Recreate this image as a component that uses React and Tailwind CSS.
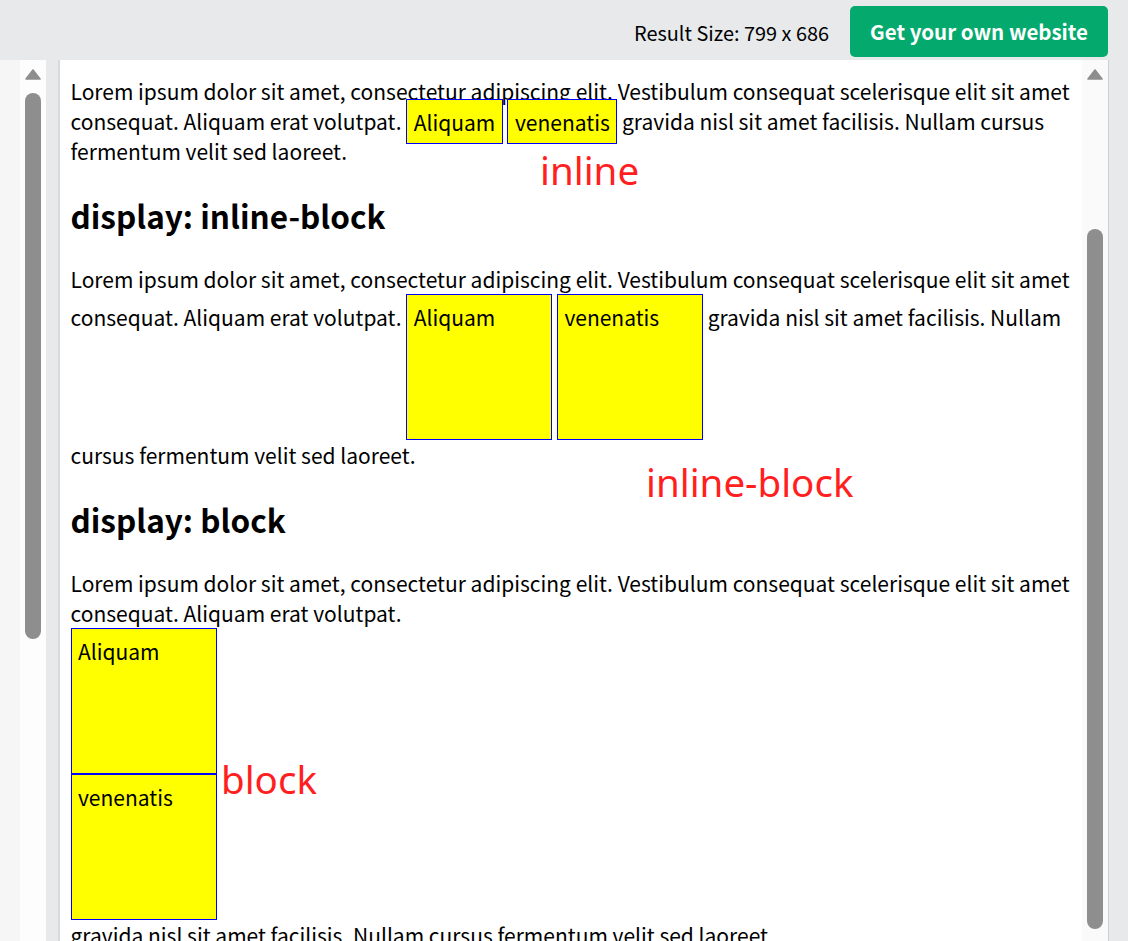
import React from "react";

function Arrow() {
  return (
    <svg width="16" height="11" viewBox="0 0 16 11" className="shrink-0">
      <path d="M8 1 L15 10 H1 Z" fill="#8e8e8e" stroke="#8e8e8e" strokeWidth="1.6" strokeLinejoin="round" />
    </svg>
  );
}

const boxInline = "border border-[#0000ff] bg-[#ffff00] p-[6.5px]";
const boxIB = "inline-block align-baseline w-[146px] h-[146px] border border-[#0000ff] bg-[#ffff00] p-[6.5px]";
const boxBlock = "block w-[146px] h-[146px] border border-[#0000ff] bg-[#ffff00] p-[6.5px]";

export default function App() {
  return (
    <div className="relative w-[1128px] h-[941px] overflow-hidden bg-[#e7e9eb] font-['Noto_Sans_CJK_SC',sans-serif] text-black flex flex-col">
      {/* top bar */}
      <div className="h-[60px] shrink-0 flex items-start justify-end pr-[20px] pt-[6px]">
        <div className="h-[51px] flex items-center">
          <span className="text-[19.9px] leading-none mr-[21px] pt-[2px]">Result Size: 799 x 686</span>
          <div className="w-[258px] h-[51px] rounded-[5px] bg-[#04aa6d] text-white font-bold text-[20.5px] leading-none flex items-center justify-center">
            Get your own website
          </div>
        </div>
      </div>

      {/* body */}
      <div className="flex-1 min-h-0 flex">
        <div className="w-[20px] bg-[#f6f6f6]" />
        <div className="w-[26px] bg-[#fdfdfd] flex flex-col items-center pt-[9px]">
          <Arrow />
          <div className="mt-[13px] w-[16px] h-[546px] rounded-full bg-[#8e8e8e]" />
        </div>
        <div className="w-[12px] bg-[#e7e9eb]" />

        {/* result panel */}
        <div className="w-[1051px] flex bg-white border-l-2 border-l-[#d9d9d9] border-r border-r-[#cfcfcf] overflow-hidden">
          <div className="flex-1 min-w-0 overflow-hidden pl-[10.5px] pr-[8px] pt-[16px] text-[21px] leading-[normal]">
            <p className="mt-0 mb-[21px]">
              Lorem ipsum dolor sit amet, consectetur adipiscing elit. Vestibulum consequat scelerisque elit sit amet consequat. Aliquam erat volutpat.{" "}
              <span className={boxInline}>Aliquam</span> <span className={boxInline}>venenatis</span> gravida nisl sit amet facilisis. Nullam cursus fermentum velit sed laoreet.
            </p>

            <h2 className="text-[31.5px] font-bold leading-[normal] my-[26px]">display: inline-block</h2>
            <p className="my-[21px]">
              Lorem ipsum dolor sit amet, consectetur adipiscing elit. Vestibulum consequat scelerisque elit sit amet consequat. Aliquam erat volutpat.{" "}
              <span className={boxIB}>Aliquam</span> <span className={boxIB}>venenatis</span> gravida nisl sit amet facilisis. Nullam cursus fermentum velit sed laoreet.
            </p>

            <h2 className="text-[31.5px] font-bold leading-[normal] my-[26px]">display: block</h2>
            <p className="my-[21px]">
              Lorem ipsum dolor sit amet, consectetur adipiscing elit. Vestibulum consequat scelerisque elit sit amet consequat. Aliquam erat volutpat.{" "}
              <span className={boxBlock}>Aliquam</span> <span className={boxBlock}>venenatis</span> gravida nisl sit amet facilisis. Nullam cursus fermentum velit sed laoreet.
            </p>
          </div>

          <div className="w-[26px] shrink-0 bg-[#fafafa] flex flex-col items-center pt-[9px]">
            <Arrow />
            <div className="mt-[149px] w-[16px] h-[700px] rounded-full bg-[#8e8e8e]" />
          </div>
        </div>

        <div className="flex-1 bg-[#e7e9eb]" />
      </div>

      {/* annotations */}
      <span className="absolute left-[540px] top-[151px] text-[38.5px] leading-none text-[#ff1f1f] font-['Noto_Sans',sans-serif]">inline</span>
      <span className="absolute left-[646px] top-[463px] text-[38.5px] leading-none text-[#ff1f1f] font-['Noto_Sans',sans-serif]">inline-block</span>
      <span className="absolute left-[221px] top-[760px] text-[38.5px] leading-none text-[#ff1f1f] font-['Noto_Sans',sans-serif]">block</span>
    </div>
  );
}
